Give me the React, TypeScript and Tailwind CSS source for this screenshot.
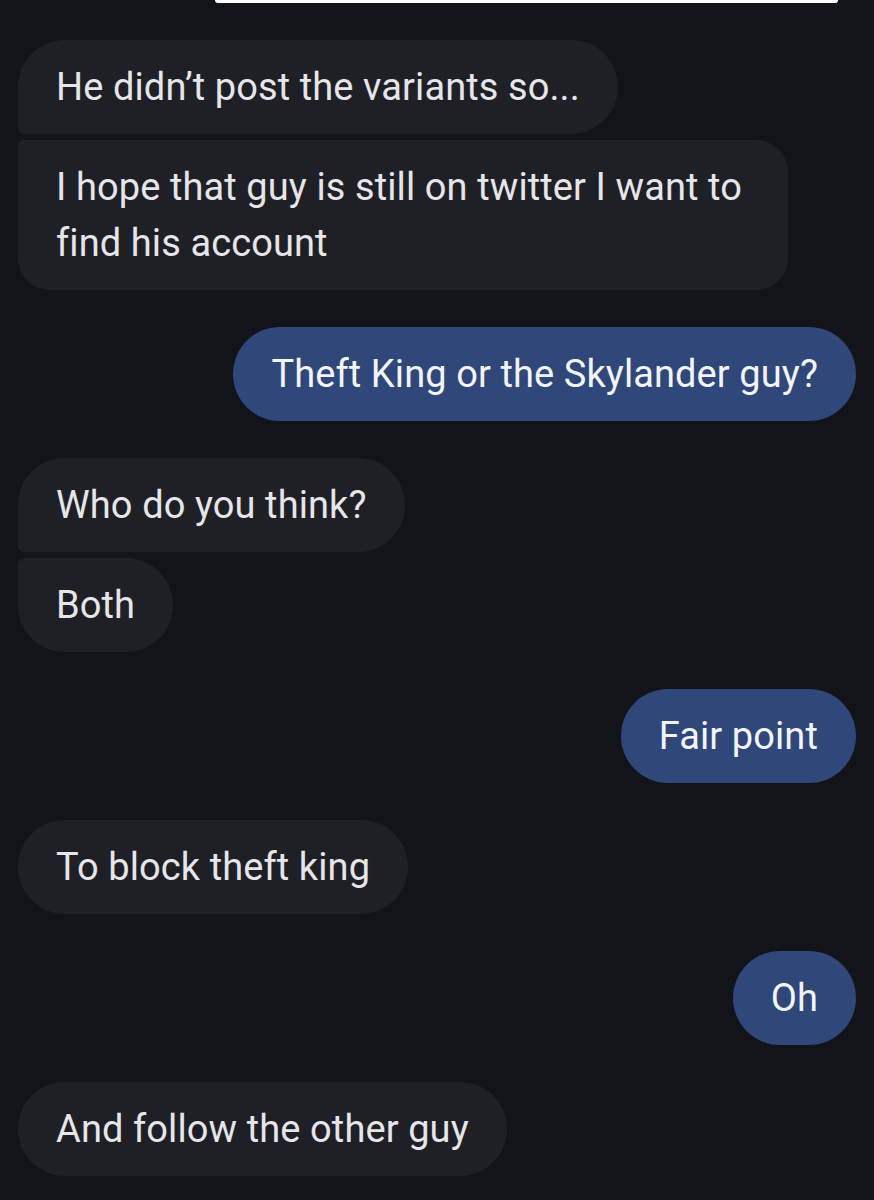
import React from 'react'

type Msg = {
  text: React.ReactNode
  sent?: boolean
  shape?: string
  width?: string
}

const groups: Msg[][] = [
  [
    { text: 'He didn’t post the variants so...', shape: 'rounded-[47px] rounded-bl-[6px]' },
    {
      text: (
        <>
          I hope that guy is still on twitter I want to
          <br />
          find his account
        </>
      ),
      shape: 'rounded-[32px] rounded-tl-[6px]',
      width: 'w-[770px]',
    },
  ],
  [{ text: 'Theft King or the Skylander guy?', sent: true }],
  [
    { text: 'Who do you think?', shape: 'rounded-[47px] rounded-bl-[6px]' },
    { text: 'Both', shape: 'rounded-[47px] rounded-tl-[6px]' },
  ],
  [{ text: 'Fair point', sent: true }],
  [{ text: 'To block theft king' }],
  [{ text: 'Oh', sent: true }],
  [{ text: 'And follow the other guy' }],
]

function Bubble({ msg }: { msg: Msg }) {
  return (
    <div
      className={`${msg.shape ?? 'rounded-[47px]'} ${msg.width ?? ''} whitespace-nowrap px-[38px] py-[19px] text-[38px] leading-[56px] tracking-[0.1px] ${
        msg.sent ? 'self-end bg-[#30477a] text-[#f3f4f8]' : 'self-start bg-[#1f2025] text-[#e6e6ea]'
      }`}
    >
      {msg.text}
    </div>
  )
}

export default function App() {
  return (
    <div
      className="min-h-[1200px] w-[874px] overflow-hidden bg-[#131419] px-[18px]"
      style={{ fontFamily: 'Roboto, "Open Sans", sans-serif' }}
    >
      {/* bottom of the white card above */}
      <div className="ml-[197px] h-[3px] w-[623px] rounded-b-full bg-white" />

      <div className="mt-[37px] flex flex-col gap-[37px] pb-10">
        {groups.map((g, i) => (
          <div key={i} className="flex flex-col gap-[6px]">
            {g.map((m, j) => (
              <Bubble key={j} msg={m} />
            ))}
          </div>
        ))}
      </div>
    </div>
  )
}
